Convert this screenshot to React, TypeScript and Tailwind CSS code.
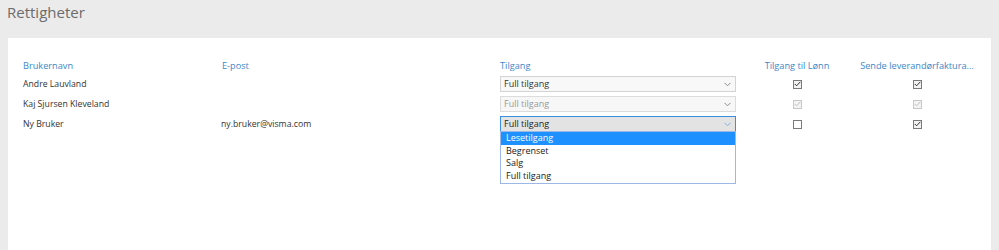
import React from "react";

type User = {
  name: string;
  email: string;
  access: string;
  disabled?: boolean;
  open?: boolean;
  salary: boolean;
  invoices: boolean;
};

const users: User[] = [
  { name: "Andre Lauvland", email: "", access: "Full tilgang", salary: true, invoices: true },
  { name: "Kaj Sjursen Kleveland", email: "", access: "Full tilgang", disabled: true, salary: true, invoices: true },
  { name: "Ny Bruker", email: "ny.bruker@visma.com", access: "Full tilgang", open: true, salary: false, invoices: true },
];

const options = ["Lesetilgang", "Begrenset", "Salg", "Full tilgang"];

function Chevron({ color }: { color: string }) {
  return (
    <svg width="7" height="5" viewBox="0 0 7 5" fill="none">
      <path d="M0.5 0.8 L3.5 3.8 L6.5 0.8" stroke={color} strokeWidth="1" />
    </svg>
  );
}

function Checkbox({ checked, disabled }: { checked: boolean; disabled?: boolean }) {
  return (
    <span
      className={`flex h-[9px] w-[9px] items-center justify-center border ${
        disabled ? "border-[#c8c8c8] bg-[#f3f3f3]" : checked ? "border-[#7a7a7a] bg-[#f1f1f1]" : "border-[#7a7a7a] bg-white"
      }`}
    >
      {checked && (
        <svg width="7" height="6" viewBox="0 0 7 6" fill="none">
          <path d="M0.8 3 L2.6 4.8 L6.4 0.8" stroke={disabled ? "#c0c0c0" : "#333"} strokeWidth="1" />
        </svg>
      )}
    </span>
  );
}

function Select({ user }: { user: User }) {
  const box = user.open
    ? "border-[#3b8ee0] bg-[#e3e3e3] text-[#222]"
    : user.disabled
    ? "border-[#dcdcdc] bg-[#f7f7f7] text-[#9a9a9a]"
    : "border-[#d3d3d3] bg-[#f8f8f8] text-[#333]";
  return (
    <div className="relative text-[9px]">
      <div className={`flex h-[16px] items-center justify-between border pl-[3px] pr-[4px] ${box}`}>
        <span>{user.access}</span>
        <Chevron color={user.open ? "#7ab0e2" : "#8a8a8a"} />
      </div>
      {user.open && (
        <div className="absolute left-0 right-0 top-[15px] z-10 border border-[#9bb8e6] bg-white pb-[1px]">
          {options.map((o, i) => (
            <div
              key={o}
              className={`h-[12.5px] px-[5px] leading-[12.5px] ${i === 0 ? "bg-[#1e90ff] text-white" : "text-[#222]"}`}
            >
              {o}
            </div>
          ))}
        </div>
      )}
    </div>
  );
}

export default function App() {
  const cols = "grid grid-cols-[199px_278px_236px_122px_118px]";
  return (
    <div className="h-[250px] overflow-hidden bg-[#ebebeb] text-[8.7px]" style={{ fontFamily: '"Open Sans", sans-serif' }}>
      <h1 className="px-[7px] text-[15px] leading-[24px] text-[#6b6b6b]">Rettigheter</h1>
      <div className="mx-[8px] mt-[14px] h-[220px] bg-white pl-[15px] pt-[18px]">
        <div className={`${cols} h-[20px] items-center text-[9.2px] text-[#3d88c9]`}>
          <span>Brukernavn</span>
          <span>E-post</span>
          <span>Tilgang</span>
          <span className="text-center">Tilgang til Lønn</span>
          <span className="truncate text-center">Sende leverandørfaktura...</span>
        </div>
        {users.map((u) => (
          <div key={u.name} className={`${cols} h-[20px] items-start text-[#333]`}>
            <span className="leading-[16px]">{u.name}</span>
            <span className="-ml-[1px] leading-[16px]">{u.email}</span>
            <div>
              <Select user={u} />
            </div>
            <div className="flex h-[16px] items-center justify-center">
              <Checkbox checked={u.salary} disabled={u.disabled} />
            </div>
            <div className="flex h-[16px] items-center justify-center">
              <Checkbox checked={u.invoices} disabled={u.disabled} />
            </div>
          </div>
        ))}
      </div>
    </div>
  );
}
